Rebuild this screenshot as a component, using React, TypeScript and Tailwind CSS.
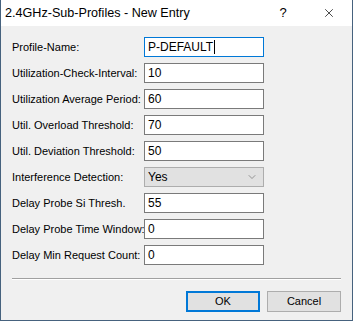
import { ChevronDown, X } from 'lucide-react';

const rows: { label: string; value: string; kind?: 'focus' | 'select' }[] = [
  { label: 'Profile-Name:', value: 'P-DEFAULT', kind: 'focus' },
  { label: 'Utilization-Check-Interval:', value: '10' },
  { label: 'Utilization Average Period:', value: '60' },
  { label: 'Util. Overload Threshold:', value: '70' },
  { label: 'Util. Deviation Threshold:', value: '50' },
  { label: 'Interference Detection:', value: 'Yes', kind: 'select' },
  { label: 'Delay Probe Si Thresh.', value: '55' },
  { label: 'Delay Probe Time Window:', value: '0' },
  { label: 'Delay Min Request Count:', value: '0' },
];

export default function App() {
  return (
    <div className="w-[353px] h-[321px] flex flex-col bg-[#f0f0f0] border border-t-0 border-[#46627e] font-['Liberation_Sans',sans-serif] text-[11px] text-black">
      {/* Title bar */}
      <div className="h-[26px] shrink-0 bg-white flex items-center justify-between pl-[4px] text-[12.6px]">
        <span>2.4GHz-Sub-Profiles - New Entry</span>
        <div className="flex items-center">
          <span className="w-[46px] text-center text-[13px]">?</span>
          <span className="w-[46px] flex justify-center">
            <X className="w-[14px] h-[14px]" strokeWidth={1.2} />
          </span>
        </div>
      </div>

      {/* Form */}
      <div className="flex flex-col gap-[6px] pt-[11px] pl-[11px]">
        {rows.map((r) => (
          <div key={r.label} className="flex items-center h-[20px]">
            <span className="w-[132px] whitespace-nowrap overflow-hidden">{r.label}</span>
            {r.kind === 'select' ? (
              <div className="w-[120px] h-[20px] bg-[#e1e1e1] border border-[#adadad] flex items-center justify-between pl-[3px] pr-[5px] text-[12px]">
                <span>{r.value}</span>
                <ChevronDown className="w-[12px] h-[12px] text-[#606060]" strokeWidth={1.2} />
              </div>
            ) : (
              <div
                className={`w-[120px] h-[20px] bg-white border flex items-center pl-[3px] text-[12px] ${
                  r.kind === 'focus' ? 'border-[#0078d7]' : 'border-[#7a7a7a]'
                }`}
              >
                <span>{r.value}</span>
                {r.kind === 'focus' && <span className="w-px h-[14px] bg-black ml-[1px]" />}
              </div>
            )}
          </div>
        ))}
      </div>

      {/* Separator */}
      <div className="mt-[13px] ml-[11px] mr-[11px] border-t border-[#a0a0a0] border-b border-b-white" />

      {/* Buttons */}
      <div className="flex justify-end gap-[7px] pt-[11px] pr-[11px]">
        <button className="w-[74px] h-[21px] bg-[#e1e1e1] border-2 border-[#0078d7]">OK</button>
        <button className="w-[74px] h-[21px] bg-[#e1e1e1] border border-[#adadad]">Cancel</button>
      </div>
    </div>
  );
}
